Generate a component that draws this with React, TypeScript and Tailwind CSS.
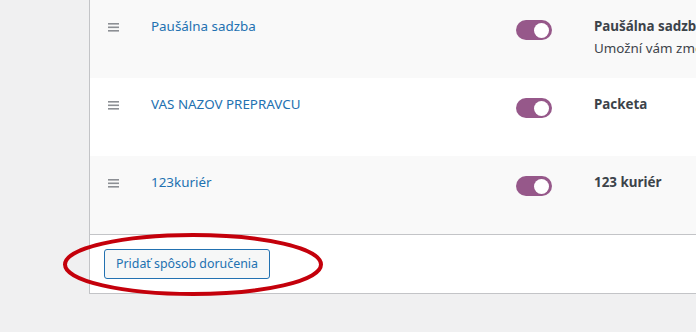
import React from "react";

const rows = [
  { name: "Paušálna sadzba", title: "Paušálna sadzba", desc: "Umožní vám zmeniť cenu", bg: "bg-[#f9f9f9]" },
  { name: "VAS NAZOV PREPRAVCU", title: "Packeta", desc: "", bg: "bg-white" },
  { name: "123kuriér", title: "123 kuriér", desc: "", bg: "bg-[#f9f9f9]" },
];

function Handle() {
  return (
    <svg width="11" height="9" viewBox="0 0 11 9" className="mt-[6px]">
      <rect x="0" y="0" width="11" height="1.6" fill="#8c8f94" />
      <rect x="0" y="3.5" width="11" height="1.6" fill="#8c8f94" />
      <rect x="0" y="7" width="11" height="1.6" fill="#8c8f94" />
    </svg>
  );
}

function Toggle() {
  return (
    <div className="w-[36px] h-[20px] rounded-full bg-[#96588a] flex items-center justify-end pr-[3px]">
      <div className="w-[15px] h-[15px] rounded-full bg-white" />
    </div>
  );
}

export default function App() {
  return (
    <div
      className="relative w-[696px] h-[332px] overflow-hidden bg-[#f0f0f1] text-[13.4px]"
      style={{ fontFamily: '"Noto Sans", sans-serif' }}
    >
      <div className="ml-[89px] w-[700px] border-l border-b border-[#c3c4c7] bg-white">
        {rows.map((r, i) => (
          <div
            key={r.name}
            className={`${r.bg} flex items-start pt-[15px] ${i === rows.length - 1 ? "border-b border-[#c3c4c7] h-[79px]" : "h-[78px]"}`}
          >
            <div className="w-[61px] shrink-0 pl-[18px] pt-[2px]">
              <Handle />
            </div>
            <div className="w-[365px] shrink-0 text-[#2271b1] leading-[22px]">{r.name}</div>
            <div className="w-[78px] shrink-0 pt-[5px]">
              <Toggle />
            </div>
            <div className="shrink-0 text-[#3c434a] leading-[22px] whitespace-nowrap">
              <div className="font-bold">{r.title}</div>
              {r.desc && <div>{r.desc}</div>}
            </div>
          </div>
        ))}
        <div className="h-[58px] flex items-center pl-[14px]">
          <button className="h-[30px] w-[166px] rounded-[3px] border border-[#2271b1] bg-[#f6f7f7] text-[#2271b1] text-[12.4px]">
            Pridať spôsob doručenia
          </button>
        </div>
      </div>
      <svg className="absolute left-0 top-0 pointer-events-none" width="696" height="332">
        <ellipse cx="193" cy="264.5" rx="128" ry="29.5" fill="none" stroke="#c4000b" strokeWidth="4" />
      </svg>
    </div>
  );
}
